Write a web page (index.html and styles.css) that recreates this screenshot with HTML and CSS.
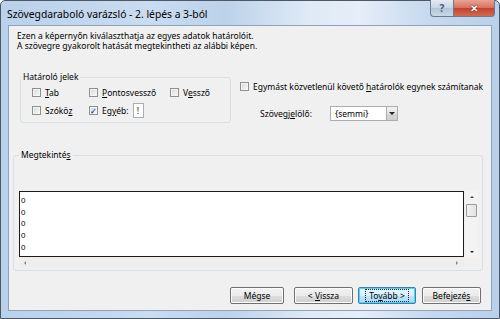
FILE: index.html
```html
<!DOCTYPE html>
<html lang="hu">
<head>
    <meta charset="UTF-8">
    <title>Szövegdaraboló varázsló</title>
    <link rel="stylesheet" href="styles.css">
</head>
<body>
    <div class="window">
        <div class="titlebar">
            <span class="title">Szövegdaraboló varázsló - 2. lépés a 3-ból</span>
            <div class="caption-btns">
                <span class="cbtn help">?</span>
                <span class="cbtn close">&#x2715;</span>
            </div>
        </div>

        <div class="client">
            <p class="intro">Ezen a képernyőn kiválaszthatja az egyes adatok határolóit.<br>A szövegre gyakorolt hatását megtekintheti az alábbi képen.</p>

            <div class="options">
                <fieldset class="group delims">
                    <legend>Határoló jelek</legend>
                    <div class="checks">
                        <label class="chk"><span class="box"></span><span><u>T</u>ab</span></label>
                        <label class="chk"><span class="box"></span><span><u>P</u>ontosvessző</span></label>
                        <label class="chk"><span class="box"></span><span>V<u>e</u>ssző</span></label>
                        <label class="chk"><span class="box"></span><span>Szókö<u>z</u></span></label>
                        <label class="chk other"><span class="box checked">&#x2713;</span><span>Eg<u>y</u>éb:</span><span class="other-input">!</span></label>
                    </div>
                </fieldset>

                <div class="side">
                    <label class="chk"><span class="box"></span><span>Egymást közvetlenül követő <u>h</u>atárolók egynek számítanak</span></label>
                    <div class="qualifier">
                        <span class="q-label">Szövegj<u>e</u>lölő:</span>
                        <div class="combo">
                            <span class="combo-text">{semmi}</span>
                            <span class="combo-drop"><span class="tri-down"></span></span>
                        </div>
                    </div>
                </div>
            </div>

            <fieldset class="group preview">
                <legend>Megtekinté<u>s</u></legend>
                <div class="preview-row">
                    <div class="data">0<br>0<br>0<br>0<br>0</div>
                    <div class="vscroll">
                        <span class="tri-up small"></span>
                        <span class="thumb"></span>
                        <span class="spacer"></span>
                        <span class="tri-down small"></span>
                    </div>
                </div>
                <div class="hscroll">
                    <span class="tri-left"></span>
                    <span class="tri-right"></span>
                </div>
            </fieldset>

            <div class="buttons">
                <span class="btn cancel"><span>Mégse</span></span>
                <span class="btn back"><span>&lt; <u>V</u>issza</span></span>
                <span class="btn next"><span class="focus">To<u>v</u>ább &gt;</span></span>
                <span class="btn finish"><span>Befejezé<u>s</u></span></span>
            </div>
        </div>
    </div>
</body>
</html>
```

FILE: styles.css
```css
* {
    box-sizing: border-box;
}

body {
    margin: 0;
    width: 500px;
    height: 319px;
    overflow: hidden;
    font-family: "Noto Sans", "Open Sans", sans-serif;
    font-size: 8.5px;
    color: #000;
}

u {
    text-decoration-thickness: 1px;
    text-underline-offset: 1px;
}

/* ablak keret */
.window {
    width: 500px;
    height: 319px;
    border: 1px solid #4d5866;
    border-radius: 5px 5px 0 0;
    background: linear-gradient(90deg, #b9d1ea 0%, #c9dcf0 30%, #bcd2ea 45%, #dfeaf6 62%, #e6eef8 72%, #c7daef 85%, #b9d0ea 100%);
    display: flex;
    flex-direction: column;
}

.titlebar {
    height: 24px;
    display: flex;
    justify-content: space-between;
    padding-left: 6px;
}

.title {
    font-size: 10.3px;
    line-height: 26px;
    color: #000;
}

.caption-btns {
    display: flex;
    align-items: flex-start;
    margin-right: 4px;
    margin-top: -1px;
}

.cbtn {
    height: 17px;
    display: flex;
    align-items: center;
    justify-content: center;
    border: 1px solid #6b7a8c;
    border-top: none;
}

.help {
    width: 24px;
    border-radius: 0 0 0 4px;
    background: linear-gradient(#e3ebf4, #c6d4e3 50%, #b3c5d9 51%, #c8d8e9);
    color: #4a5a6e;
    font-size: 10px;
    font-weight: bold;
}

.close {
    width: 41px;
    border-left: none;
    border-radius: 0 0 4px 0;
    background: linear-gradient(#e8a493, #d7705f 50%, #c4402c 51%, #d46a4e);
    color: #fff;
    font-size: 10px;
    font-weight: bold;
    text-shadow: 0 0 1px #4a1010, 0 0 1px #4a1010;
}

/* kliens terület */
.client {
    margin: 0 7px;
    height: 286px;
    border: 1px solid #8aa3bf;
    background: #f0f0f0;
}

.intro {
    margin: 0;
    padding: 5px 0 0 8px;
    line-height: 10px;
    height: 25px;
}

.options {
    display: flex;
    margin: 21px 0 0 11px;
    height: 51px;
}

.group {
    margin: 0;
    padding: 0;
    border: 1px solid #d5dfe5;
    border-radius: 3px;
}

.group legend {
    padding: 0 2px;
    margin-left: 0;
    line-height: 10px;
}

.delims {
    width: 211px;
    height: 51px;
}

.checks {
    display: grid;
    grid-template-columns: 57px 81px auto;
    grid-template-rows: 15px 15px;
    row-gap: 3px;
    padding: 3px 0 0 11px;
}

.chk {
    display: flex;
    align-items: center;
    gap: 4px;
    white-space: nowrap;
}

.box {
    width: 9px;
    height: 9px;
    border: 1px solid #8e8f8f;
    background: linear-gradient(135deg, #d6d6d6, #f4f4f4 80%);
    box-shadow: inset 0 0 0 1px #f4f4f4;
    font-size: 8px;
    line-height: 7px;
    color: #2b4e95;
    text-align: center;
    font-weight: bold;
}

.other-input {
    width: 11px;
    height: 15px;
    border: 1px solid #abadb3;
    background: #fff;
    line-height: 13px;
    padding-left: 3px;
}

.side {
    margin-left: 9px;
    padding-top: 9px;
}

.qualifier {
    display: flex;
    align-items: center;
    margin: 14px 0 0 20px;
}

.q-label {
    width: 70px;
}

.combo {
    width: 68px;
    height: 15px;
    display: flex;
    border: 1px solid #abadb3;
    background: #fff;
}

.combo-text {
    flex: 1;
    padding-left: 4px;
    line-height: 13px;
}

.combo-drop {
    width: 11px;
    display: flex;
    align-items: center;
    justify-content: center;
    border-left: 1px solid #acacac;
    background: linear-gradient(#f2f2f2, #e4e4e4 50%, #d6d6d6 51%, #cfcfcf);
}

.tri-down {
    border-left: 3px solid transparent;
    border-right: 3px solid transparent;
    border-top: 3px solid #222;
}

.tri-up {
    border-left: 3px solid transparent;
    border-right: 3px solid transparent;
    border-bottom: 3px solid #444;
}

.small {
    border-left-width: 2px;
    border-right-width: 2px;
    border-top-width: 2px;
    border-bottom-width: 2px;
}

.tri-left {
    border-top: 2px solid transparent;
    border-bottom: 2px solid transparent;
    border-right: 2px solid #888;
}

.tri-right {
    border-top: 2px solid transparent;
    border-bottom: 2px solid transparent;
    border-left: 2px solid #888;
}

/* előnézet */
.preview {
    margin: 27px 0 0 4px;
    width: 470px;
    height: 121px;
    padding: 31px 0 0 5px;
}

.preview-row {
    display: flex;
    gap: 1px;
}

.data {
    width: 445px;
    height: 66px;
    border: 1px solid #1c1c1c;
    background: #fff;
    font-family: "Liberation Sans", sans-serif;
    font-size: 8px;
    line-height: 11.7px;
    padding: 3px 0 0 1px;
    overflow: hidden;
}

.vscroll {
    width: 13px;
    height: 66px;
    display: flex;
    flex-direction: column;
    align-items: center;
    padding: 5px 0 4px;
    background: #f3f3f3;
}

.vscroll .thumb {
    width: 11px;
    height: 13px;
    margin-top: 6px;
    border: 1px solid #9a9a9a;
    border-radius: 1px;
    background: linear-gradient(90deg, #f3f3f3, #e2e2e2);
}

.vscroll .spacer {
    flex: 1;
}

.hscroll {
    width: 445px;
    height: 11px;
    display: flex;
    align-items: center;
    justify-content: space-between;
    padding: 0 6px 0 5px;
    background: #eeeeee;
}

/* gombok */
.buttons {
    display: flex;
    justify-content: flex-end;
    margin: 16px 10px 0 0;
}

.btn {
    height: 17px;
    display: flex;
    align-items: center;
    justify-content: center;
    border: 1px solid #707070;
    border-radius: 2px;
    background: linear-gradient(#f2f2f2, #ebebeb 50%, #dddddd 51%, #cfcfcf);
    box-shadow: inset 0 0 0 1px #fcfcfc;
}

.cancel {
    width: 54px;
    margin-right: 10px;
}

.back {
    width: 59px;
    margin-right: 5px;
}

.next {
    width: 58px;
    margin-right: 6px;
    border-color: #3c7fb1;
    box-shadow: inset 0 0 0 1px #48d7fb;
    background: linear-gradient(#eaf6fd, #d9f0fc 50%, #bee6fd 51%, #a7d9f5);
}

.next .focus {
    border: 1px dotted #222;
    padding: 0 3px;
    line-height: 11px;
}

.finish {
    width: 59px;
}
```
